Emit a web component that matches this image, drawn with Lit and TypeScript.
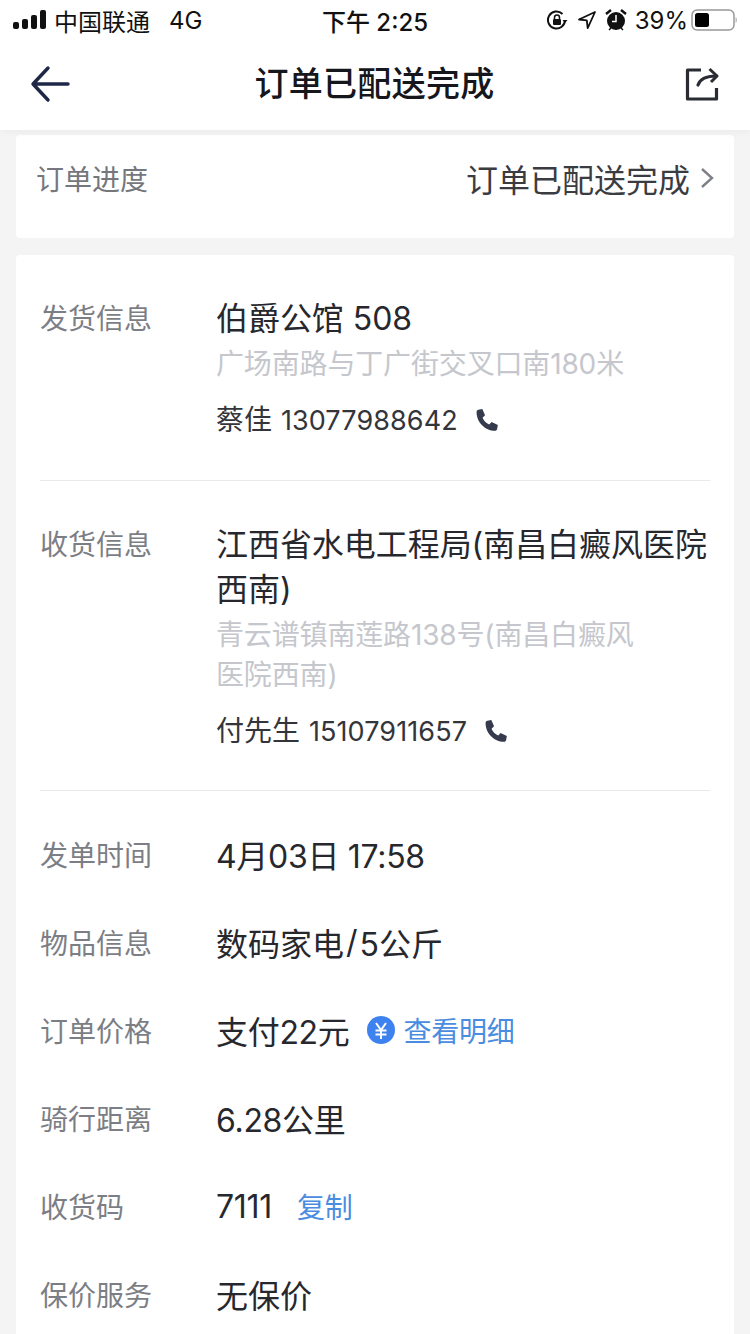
import { LitElement, html, css } from "lit";
import { customElement } from "lit/decorators.js";

const phone = html`<svg class="phone" viewBox="0 0 24 24" width="25" height="25"><path fill="#353a4d" d="M4.200 1.600 8 1l2.600 6-2.400 2.300c1 2.600 3.500 5.300 6.400 6.500l2.300-2.300 6 2.700-.7 3.900c-.2 1-1 1.700-2 1.700C10.500 21.800 2.200 13.300 2.500 3.500c0-.9.700-1.700 1.700-1.900z"/></svg>`;

@customElement("app-root")
export class AppRoot extends LitElement {
  static styles = css`
    :host { display: block; width: 750px; height: 1334px; overflow: hidden; background: #f4f4f4;
      font-family: Inter, "Noto Sans CJK SC", sans-serif; color: #26282e; }
    .top { background: #fff; height: 130px; box-shadow: 0 2px 8px rgba(0,0,0,.04); position: relative; z-index: 1; }
    .status { height: 40px; display: flex; align-items: center; justify-content: space-between; padding: 0 12px 0 13px; font-size: 24px; color: #111; position: relative; }
    .left, .right { display: flex; align-items: center; }
    .carrier { margin-left: 6px; font-size: 24px; }
    .net { margin-left: 19px; font-size: 24px; }
    .time { position: absolute; left: 0; right: 0; text-align: center; font-weight: 500; font-size: 24px; }
    .right svg { display: block; }
    .loc { margin-left: 9px; }
    .alarm { margin-left: 8px; }
    .pct { margin: 0 2px 0 8px; font-size: 24px; }
    .nav { height: 88px; display: grid; grid-template-columns: 1fr auto 1fr; align-items: center; padding: 0 31px 0 30px; }
    .nav h1 { margin: 0; font-size: 34px; font-weight: 500; color: #15171c; line-height: 46px; letter-spacing: .3px; }
    .nav svg { display: block; }
    .share { justify-self: end; }
    .card { background: #fff; margin: 0 16px; border-radius: 4px; }
    .progress { height: 103px; margin-top: 5px; display: flex; justify-content: space-between; align-items: center; padding: 0 20px 18px 20px; box-sizing: border-box; }
    .progress .k { font-size: 28px; color: #75777d; }
    .progress .v { font-size: 32px; color: #3a3c42; display: flex; align-items: center; gap: 10px; }
    .detail { margin-top: 17px; padding: 0 24px; height: 1100px; }
    .sec { display: grid; grid-template-columns: 176px 1fr; padding: 41px 0 40px; border-bottom: 1px solid #e9e9ec; }
    .sec + .sec { padding-bottom: 39px; }
    .sec .lab { padding-top: 1px; }
    .lab { font-size: 28px; color: #7c7e85; line-height: 45px; }
    .name { font-size: 32px; line-height: 45px; color: #26282e; letter-spacing: -.05px; }
    .sub { font-size: 28px; line-height: 40px; color: #c5c7cd; margin-top: 3px; max-width: 425px; letter-spacing: -.15px; }
    .contact { font-size: 28px; line-height: 40px; height: 40px; margin-top: 16px; color: #33353b; display: flex; align-items: center; gap: 16px; }
    .digits { font-size: 27px; letter-spacing: .1px; margin-left: 1px; }
    .rows { padding-top: 21px; }
    .row { display: grid; grid-template-columns: 176px 1fr; height: 88px; align-items: center; }
    .row .val { font-size: 32px; color: #26282e; display: flex; align-items: center; padding-bottom: 5px; }
    .row .tight { letter-spacing: -.3px; }
    .row .code { align-items: baseline; }
    .slash { padding: 0 2px; }
    .link { color: #4a8ce0; font-size: 28px; letter-spacing: -.3px; }
    .yen { width: 28px; height: 28px; margin: 0 9px 0 17px; display: block; }
    .copy { margin-left: 25px; }
  `;

  render() {
    return html`
      <div class="top">
        <div class="status">
          <div class="left">
            <svg width="35" height="22" viewBox="0 0 35 22"><rect x="0" y="13" width="6" height="7" rx="2" fill="#111"/><rect x="9" y="10" width="6" height="10" rx="2" fill="#111"/><rect x="18" y="6" width="6" height="14" rx="2" fill="#111"/><rect x="27" y="1" width="6" height="19" rx="2" fill="#111"/></svg>
            <span class="carrier">中国联通</span><span class="net">4G</span>
          </div>
          <div class="time">下午 2:25</div>
          <div class="right">
            <svg width="22" height="22" viewBox="0 0 22 22"><path d="M19 11a8.500 8.500 0 1 1-2.500-6" fill="none" stroke="#111" stroke-width="2"/><path d="M21.500 11h-5l2.500 3z" fill="#111"/><rect x="7" y="10" width="8" height="6" rx="1" fill="#111"/><path d="M8.500 10V8.500a2.500 2.500 0 0 1 5 0V10" fill="none" stroke="#111" stroke-width="1.500"/></svg>
            <svg class="loc" width="20" height="20" viewBox="0 0 20 20"><path d="M18 2 2 9.500l7.800.9.900 7.800z" fill="none" stroke="#111" stroke-width="1.800" stroke-linejoin="round"/></svg>
            <svg class="alarm" width="22" height="24" viewBox="0 0 22 24"><circle cx="11" cy="13" r="9" fill="#111"/><path d="M1 6l5-4M21 6l-5-4" stroke="#111" stroke-width="2.500"/><path d="M4 22l2-2M18 22l-2-2" stroke="#111" stroke-width="1.500"/><path d="M11 7v6.500H7" fill="none" stroke="#fff" stroke-width="1.500"/></svg>
            <span class="pct">39%</span>
            <svg width="48" height="24" viewBox="0 0 48 24"><rect x="2" y="2" width="42" height="20" rx="5" fill="none" stroke="#999" stroke-width="1.500"/><rect x="5" y="5" width="14" height="14" rx="2.500" fill="#000"/><path d="M45.500 9c1 .5 1.500 1.500 1.500 3s-.5 2.500-1.500 3z" fill="#bbb"/></svg>
          </div>
        </div>
        <div class="nav">
          <svg width="40" height="40" viewBox="0 0 40 40"><path d="M38 20H3M18 4 3 20l15 16" fill="none" stroke="#1e2747" stroke-width="3.400" stroke-linecap="round" stroke-linejoin="round"/></svg>
          <h1>订单已配送完成</h1>
          <svg class="share" width="34" height="34" viewBox="0 0 34 34"><path d="M16 3H2.500v29h29V21" fill="none" stroke="#2a2c33" stroke-width="3.200" stroke-linejoin="round"/><path d="M13 18c2-6 8-9 18-9" fill="none" stroke="#2a2c33" stroke-width="3.200" stroke-linecap="round"/><path d="M24.500 2l7.500 7-6 6" fill="none" stroke="#2a2c33" stroke-width="3" stroke-linejoin="round"/></svg>
        </div>
      </div>

      <div class="card progress">
        <span class="k">订单进度</span>
        <span class="v">订单已配送完成
          <svg width="14" height="22" viewBox="0 0 14 22"><path d="M2 2l10 9-10 9" fill="none" stroke="#7f8188" stroke-width="2.400"/></svg>
        </span>
      </div>

      <div class="card detail">
        <div class="sec">
          <div class="lab">发货信息</div>
          <div>
            <div class="name">伯爵公馆 508</div>
            <div class="sub">广场南路与丁广街交叉口南180米</div>
            <div class="contact"><span>蔡佳 <span class="digits">13077988642</span></span>${phone}</div>
          </div>
        </div>
        <div class="sec">
          <div class="lab">收货信息</div>
          <div>
            <div class="name">江西省水电工程局(南昌白癜风医院西南)</div>
            <div class="sub">青云谱镇南莲路138号(南昌白癜风医院西南)</div>
            <div class="contact"><span>付先生 <span class="digits">15107911657</span></span>${phone}</div>
          </div>
        </div>
        <div class="rows">
          <div class="row"><div class="lab">发单时间</div><div class="val tight">4月03日 17:58</div></div>
          <div class="row"><div class="lab">物品信息</div><div class="val">数码家电<span class="slash">/</span>5公斤</div></div>
          <div class="row"><div class="lab">订单价格</div><div class="val tight">支付22元
            <svg class="yen" viewBox="0 0 28 28"><circle cx="14" cy="14" r="14" fill="#3d82ee"/><path d="M9 7l5 7 5-7M8.500 14.500h11M8.500 18.500h11M14 14v9" fill="none" stroke="#fff" stroke-width="2"/></svg>
            <span class="link">查看明细</span></div></div>
          <div class="row"><div class="lab">骑行距离</div><div class="val tight">6.28公里</div></div>
          <div class="row"><div class="lab">收货码</div><div class="val tight code">7111<span class="link copy">复制</span></div></div>
          <div class="row"><div class="lab">保价服务</div><div class="val">无保价</div></div>
        </div>
      </div>
    `;
  }
}
